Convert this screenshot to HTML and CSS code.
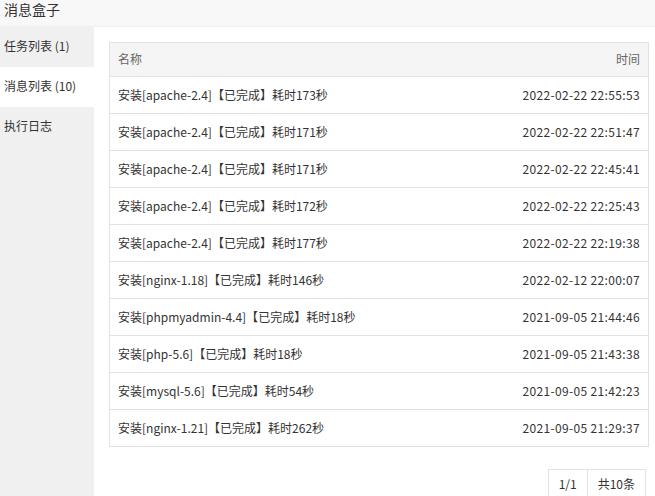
FILE: index.html
```html
<!DOCTYPE html>
<html>
<head>
  <title>消息盒子</title>
  <link rel="stylesheet" href="styles.css">
</head>
<body>
  <div class="title-bar">消息盒子</div>
  <div class="main">
    <div class="side">
      <div class="side-item">任务列表 (1)</div>
      <div class="side-item active">消息列表 (10)</div>
      <div class="side-item">执行日志</div>
    </div>

    <div class="content">
      <table class="msg-table">
        <thead>
          <tr>
            <th>名称</th>
            <th class="time">时间</th>
          </tr>
        </thead>
        <tbody>
          <tr><td>安装[apache-2.4]【已完成】耗时173秒</td><td class="time">2022-02-22 22:55:53</td></tr>
          <tr><td>安装[apache-2.4]【已完成】耗时171秒</td><td class="time">2022-02-22 22:51:47</td></tr>
          <tr><td>安装[apache-2.4]【已完成】耗时171秒</td><td class="time">2022-02-22 22:45:41</td></tr>
          <tr><td>安装[apache-2.4]【已完成】耗时172秒</td><td class="time">2022-02-22 22:25:43</td></tr>
          <tr><td>安装[apache-2.4]【已完成】耗时177秒</td><td class="time">2022-02-22 22:19:38</td></tr>
          <tr><td>安装[nginx-1.18]【已完成】耗时146秒</td><td class="time">2022-02-12 22:00:07</td></tr>
          <tr><td>安装[phpmyadmin-4.4]【已完成】耗时18秒</td><td class="time">2021-09-05 21:44:46</td></tr>
          <tr><td>安装[php-5.6]【已完成】耗时18秒</td><td class="time">2021-09-05 21:43:38</td></tr>
          <tr><td>安装[mysql-5.6]【已完成】耗时54秒</td><td class="time">2021-09-05 21:42:23</td></tr>
          <tr><td>安装[nginx-1.21]【已完成】耗时262秒</td><td class="time">2021-09-05 21:29:37</td></tr>
        </tbody>
      </table>

      <div class="pager">
        <span class="pager-cell">1/1</span>
        <span class="pager-cell">共10条</span>
      </div>
    </div>
  </div>
</body>
</html>
```

FILE: styles.css
```css
html, body {
  height: 100%;
}

body {
  margin: 0;
  overflow: hidden;
  font-family: "Noto Sans CJK SC", "Liberation Sans", sans-serif;
  font-size: 12px;
  color: #333;
  background: #fff;
}

.title-bar {
  height: 25px;
  padding: 1px 0 0 4px;
  font-size: 14px;
  line-height: 16px;
  background: #f8f8f8;
  border-bottom: 1px solid #efefef;
  color: #333;
}

.main {
  display: flex;
  height: calc(100% - 27px);
}

.side {
  width: 94px;
  flex-shrink: 0;
  background: #f0f0f0;
}

.side-item {
  height: 40px;
  line-height: 38px;
  padding-left: 4px;
  color: #333;
  cursor: pointer;
}

.side-item.active {
  background: #fff;
}

.content {
  flex: 1;
  padding: 15px 6px 0 15px;
}

.msg-table {
  width: 100%;
  border-collapse: collapse;
}

.msg-table th, .msg-table td {
  border: 1px solid #e2e2e2;
  padding: 0 8px 2px;
  text-align: left;
  font-weight: normal;
  white-space: nowrap;
}

.msg-table th {
  height: 31px;
  background: #f5f5f5;
  color: #666;
}

.msg-table td {
  height: 34px;
}

.msg-table th:first-child, .msg-table td:first-child {
  border-right-color: transparent;
}

.msg-table .time {
  text-align: right;
}

.msg-table td.time {
  letter-spacing: 0.35px;
}

.pager {
  display: flex;
  justify-content: flex-end;
  margin: 22px 3px 0 0;
}

.pager-cell {
  height: 28px;
  line-height: 28px;
  padding: 0 10px;
  border: 1px solid #e2e2e2;
  color: #333;
}

.pager-cell + .pager-cell {
  border-left: none;
}
```
